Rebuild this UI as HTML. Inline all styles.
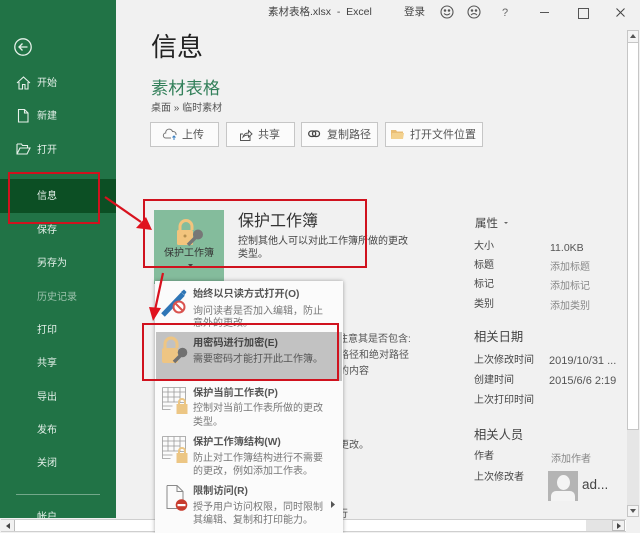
<!DOCTYPE html>
<html lang="zh-CN"><head><meta charset="utf-8"><title>信息</title>
<style>
html,body{margin:0;padding:0}
body{width:640px;height:533px;overflow:hidden;background:#f1f1f1;font-family:"Liberation Sans","Noto Sans CJK SC",sans-serif;color:#444}
#w{position:absolute;left:0;top:0;width:640px;height:533px;overflow:hidden;background:#f1f1f1;filter:blur(.35px)}
.t{position:absolute;white-space:nowrap;line-height:14px;font-size:10px}
.a{position:absolute}
.n{color:#e4f0e9;left:37px}
.btn{position:absolute;top:122px;height:23px;background:#fbfbfb;border:1px solid #c6c6c6;box-sizing:content-box}
.r{position:absolute;border:2px solid #d0121e;box-sizing:border-box}
.h{font-size:10.2px;font-weight:bold;color:#555}
.d{font-size:10px;color:#777}
.g{color:#888}
svg{position:absolute;overflow:visible}
</style></head><body><div id="w">
<div class="a" style="left:0;top:0;width:116px;height:518px;background:#217346"></div>
<div class="a" style="left:0;top:179px;width:116px;height:34px;background:#0c4f24"></div>
<div class="a" style="left:16px;top:494px;width:84px;height:1px;background:#73a88a"></div>

<svg style="left:14px;top:38px" width="20" height="20" fill="none" stroke="#e6f1ea" stroke-width="1.3"><circle cx="9" cy="9" r="8.2"/><path d="M13.5 9H5M8.5 5.5 5 9l3.5 3.5"/></svg>
<svg style="left:16px;top:75px" width="16" height="16" fill="none" stroke="#e6f1ea" stroke-width="1.1"><path d="M1 8 7.500 2 14 8M3 7v7h3.500V9.500h2.500V14H12V7"/></svg>
<svg style="left:17px;top:108px" width="14" height="16" fill="none" stroke="#e6f1ea" stroke-width="1.1"><path d="M1.500 1.500h6l3.500 3.500v9h-9.500zM7.500 1.500V5H11"/></svg>
<svg style="left:16px;top:142px" width="16" height="14" fill="none" stroke="#e6f1ea" stroke-width="1.1"><path d="M1 2h4.500l1 1.500h5V6M1 2v10h10l3-6H4L1 12"/></svg>

<span class="t n" style="top:77px">开始</span>
<span class="t n" style="top:110px">新建</span>
<span class="t n" style="top:144px">打开</span>
<span class="t n" style="top:190px">信息</span>
<span class="t n" style="top:224px">保存</span>
<span class="t n" style="top:257px">另存为</span>
<span class="t" style="left:37px;top:291px;color:#9cc2ac">历史记录</span>
<span class="t n" style="top:324px">打印</span>
<span class="t n" style="top:357px">共享</span>
<span class="t n" style="top:391px">导出</span>
<span class="t n" style="top:424px">发布</span>
<span class="t n" style="top:457px">关闭</span>
<span class="t n" style="top:511px;height:7px;overflow:hidden">帐户</span>

<span class="t" style="left:268px;top:5px;font-size:10.5px;color:#444">素材表格.xlsx &nbsp;-&nbsp; Excel</span>
<span class="t" style="left:404px;top:5px;font-size:10.5px;color:#444">登录</span>
<svg style="left:440px;top:5px" width="16" height="16" fill="none" stroke="#555" stroke-width="1.1"><circle cx="7" cy="7" r="6"/><circle cx="5" cy="5.500" r=".7" fill="#555"/><circle cx="9" cy="5.500" r=".7" fill="#555"/><path d="M4 8.500q3 2.800 6 0"/></svg>
<svg style="left:467px;top:5px" width="16" height="16" fill="none" stroke="#555" stroke-width="1.1"><circle cx="7" cy="7" r="6"/><circle cx="5" cy="5.500" r=".7" fill="#555"/><circle cx="9" cy="5.500" r=".7" fill="#555"/><path d="M4 10q3-2.800 6 0"/></svg>
<span class="t" style="left:502px;top:6px;font-size:11px;color:#666">?</span>
<div class="a" style="left:540px;top:12px;width:9px;height:1px;background:#555"></div>
<div class="a" style="left:578px;top:8px;width:9px;height:9px;border:1px solid #555"></div>
<svg style="left:616px;top:8px" width="11" height="11" stroke="#444" stroke-width="1"><path d="M.5.500l8 8M8.500.500l-8 8"/></svg>

<span class="t" style="left:151px;top:31px;font-size:26px;line-height:32px;color:#222">信息</span>
<span class="t" style="left:151px;top:78px;font-size:17.300px;line-height:20px;color:#33805a">素材表格</span>
<span class="t" style="left:151px;top:102px;font-size:10px;color:#555">桌面 » 临时素材</span>

<div class="btn" style="left:150px;width:67px"></div>
<svg style="left:163px;top:128px" width="15" height="13" fill="none" stroke="#777" stroke-width="1"><path d="M8 10H3a2.500 2.500 0 0 1-.3-5A3.500 3.500 0 0 1 9.500 3.500 3 3 0 0 1 13 7"/><path d="M11 12V8M9.500 9.500 11 8l1.500 1.500" stroke="#3a7fc1"/></svg>
<span class="t" style="left:182px;top:128px;font-size:11px;color:#555">上传</span>
<div class="btn" style="left:226px;width:67px"></div>
<svg style="left:239px;top:128px" width="14" height="14" fill="none" stroke="#555" stroke-width="1"><path d="M11 8v4.500H1.500V6H4M4 9q1-4 5.500-4V2.500L13 6 9.500 9V7.200Q6 7 4 9z"/></svg>
<span class="t" style="left:258px;top:128px;font-size:11px;color:#555">共享</span>
<div class="btn" style="left:301px;width:75px"></div>
<svg style="left:308px;top:130px" width="13" height="9" fill="none" stroke="#444" stroke-width="1.300"><rect x=".7" y="1" width="7" height="5.500" rx="2.700"/><rect x="4.500" y="1" width="7" height="5.500" rx="2.700"/></svg>
<span class="t" style="left:327px;top:128px;font-size:11px;color:#555">复制路径</span>
<div class="btn" style="left:385px;width:96px"></div>
<svg style="left:391px;top:128px" width="14" height="12"><path d="M0 2h5l1 1.500h6V11H0z" fill="#e9bd74"/><path d="M1 5h12l-1 6H0z" fill="#f3d18e"/></svg>
<span class="t" style="left:410px;top:128px;font-size:11px;color:#555">打开文件位置</span>

<!-- protect -->
<span class="t" style="left:238px;top:212px;font-size:16px;line-height:20px;color:#333">保护工作簿</span>
<span class="t" style="left:238px;top:235px;font-size:10px;color:#444">控制其他人可以对此工作簿所做的更改</span>
<span class="t" style="left:238px;top:248px;font-size:10px;color:#444">类型。</span>
<div class="a" style="left:154px;top:210px;width:70px;height:74px;background:#84bc9c"></div>
<svg style="left:177px;top:220px" width="30" height="28"><path d="M3 10V6.500a6 6 0 0 1 12 0V10" fill="none" stroke="#f2c47d" stroke-width="3"/><rect y="10" width="16" height="15" rx="1.500" fill="#f2c47d"/><circle cx="8" cy="16" r="1.500" fill="#b58f4f"/><path d="M11 25l8-8" stroke="#777" stroke-width="3.500"/><circle cx="21" cy="14.500" r="5" fill="#777"/></svg>
<span class="t" style="left:164px;top:247px;font-size:10px;color:#333">保护工作簿</span>
<svg style="left:188px;top:264px" width="5" height="3"><path d="M0 0h5L2.500 3z" fill="#444"/></svg>

<!-- right -->
<span class="t" style="left:475px;top:217px;font-size:11.500px;color:#444">属性</span>
<svg style="left:504px;top:222px" width="4" height="2"><path d="M0 0h4L2 2z" fill="#666"/></svg>
<span class="t" style="left:474px;top:240px">大小</span><span class="t" style="left:550px;top:241px;font-size:10.500px;color:#555">11.0KB</span>
<span class="t" style="left:474px;top:259px">标题</span><span class="t g" style="left:550px;top:261px">添加标题</span>
<span class="t" style="left:474px;top:278px">标记</span><span class="t g" style="left:550px;top:280px">添加标记</span>
<span class="t" style="left:474px;top:298px">类别</span><span class="t g" style="left:550px;top:300px">添加类别</span>
<span class="t" style="left:474px;top:330px;font-size:12.300px">相关日期</span>
<span class="t" style="left:474px;top:354px">上次修改时间</span><span class="t" style="left:549px;top:354px;font-size:11px;color:#555">2019/10/31 ...</span>
<span class="t" style="left:474px;top:374px">创建时间</span><span class="t" style="left:549px;top:374px;font-size:11px;color:#555">2015/6/6 2:19</span>
<span class="t" style="left:474px;top:394px">上次打印时间</span>
<span class="t" style="left:474px;top:428px;font-size:12.300px">相关人员</span>
<span class="t" style="left:474px;top:450px">作者</span><span class="t g" style="left:551px;top:453px">添加作者</span>
<span class="t" style="left:474px;top:471px">上次修改者</span>
<div class="a" style="left:548px;top:471px;width:30px;height:30px;background:#b4b4b4;overflow:hidden"><div class="a" style="left:9px;top:4px;width:13px;height:15px;border-radius:50%;background:#f4f4f4"></div><div class="a" style="left:3px;top:20px;width:24px;height:12px;background:#f4f4f4;border-radius:5px 5px 0 0"></div></div>
<span class="t" style="left:582px;top:477px;font-size:13.500px;line-height:16px;color:#444">ad...</span>

<!-- text behind menu -->
<span class="t" style="left:338px;top:333px;color:#555">注意其是否包含:</span>
<span class="t" style="left:339px;top:349px;color:#555">路径和绝对路径</span>
<span class="t" style="left:339px;top:365px;color:#555">的内容</span>
<span class="t" style="left:339px;top:439px;color:#555">更改。</span>
<span class="t" style="left:338px;top:508px;height:11px;overflow:hidden;color:#555">行</span>

<!-- scrollbars -->
<div class="a" style="left:0;top:519px;width:640px;height:14px;background:#f1f1f1"></div>
<div class="a" style="left:1px;top:519px;width:625px;height:13px;background:#fff;border-top:1px solid #cfcfcf;border-bottom:1px solid #cfcfcf;box-sizing:border-box"></div>
<div class="a" style="left:1px;top:520px;width:13px;height:11px;background:#f1f1f1;border-right:1px solid #bbb"></div>
<svg style="left:6px;top:523px" width="4" height="6"><path d="M4 0v6L0 3z" fill="#444"/></svg>
<div class="a" style="left:586px;top:520px;width:26px;height:11px;background:#e4e4e4"></div>
<div class="a" style="left:612px;top:520px;width:13px;height:11px;background:#f1f1f1;border:1px solid #bbb;box-sizing:border-box"></div>
<svg style="left:617px;top:523px" width="4" height="6"><path d="M0 0v6l4-3z" fill="#444"/></svg>
<div class="a" style="left:627px;top:30px;width:12px;height:400px;background:#fff;border:1px solid #c6c6c6;box-sizing:border-box"></div>
<div class="a" style="left:627px;top:30px;width:12px;height:13px;background:#f4f4f4;border:1px solid #c6c6c6;box-sizing:border-box"></div>
<svg style="left:630px;top:34px" width="7" height="4"><path d="M0 4h6L3 0z" fill="#555"/></svg>
<div class="a" style="left:627px;top:430px;width:12px;height:75px;background:#e6e6e6"></div>
<div class="a" style="left:627px;top:505px;width:12px;height:12px;background:#f4f4f4;border:1px solid #c6c6c6;box-sizing:border-box"></div>
<svg style="left:630px;top:509px" width="7" height="4"><path d="M0 0h6L3 4z" fill="#555"/></svg>

<!-- menu -->
<div class="a" style="left:155px;top:281px;width:188px;height:252px;background:#fbfbfb;box-shadow:0 0 4px rgba(0,0,0,.35)"></div>
<div class="a" style="left:156px;top:332px;width:186px;height:49px;background:#c2c2c2"></div>

<svg style="left:161px;top:288px" width="28" height="32"><path d="M2 27 22 6" stroke="#2e75b6" stroke-width="5"/><path d="M20 4l3-2.500 2.500 2.500-2 3z" fill="#2e75b6"/><circle cx="18" cy="19" r="5.500" fill="#fff" stroke="#d9534f" stroke-width="2"/><path d="M14.500 15.500l7 7" stroke="#d9534f" stroke-width="2"/></svg>
<span class="t h" style="left:193px;top:288px">始终以只读方式打开(O)</span>
<span class="t d" style="left:193px;top:305px">询问读者是否加入编辑，防止</span>
<span class="t d" style="left:193px;top:317px;height:11px;overflow:hidden">意外的更改。</span>

<svg style="left:162px;top:337px" width="30" height="30"><path d="M3 11V7a6 6 0 0 1 12 0v4" fill="none" stroke="#eec583" stroke-width="3"/><rect y="11" width="16" height="15" rx="2" fill="#eec583"/><path d="M12 25l7-7" stroke="#707070" stroke-width="3.500"/><circle cx="20.500" cy="15.500" r="4.800" fill="#707070"/></svg>
<span class="t h" style="left:193px;top:337px;color:#444">用密码进行加密(E)</span>
<span class="t" style="left:193px;top:353px;font-size:10px;color:#555">需要密码才能打开此工作簿。</span>

<svg style="left:162px;top:387px" width="26" height="28" fill="none" stroke="#9a9a9a" stroke-width=".8"><path d="M.5.500h23v15h-6M.5.500v22h8M.5 5h23M.5 10h18M.5 15h16M.5 19h10M6 .5v15M12 .5v15M18 .5v15"/><path d="M17 17v-2a3 3 0 0 1 6 0v2" stroke="#ecc684" stroke-width="2"/><rect x="14.500" y="17" width="11" height="10" fill="#ecc684" stroke="none"/></svg>
<span class="t h" style="left:193px;top:387px">保护当前工作表(P)</span>
<span class="t d" style="left:193px;top:402px">控制对当前工作表所做的更改</span>
<span class="t d" style="left:193px;top:416px">类型。</span>

<svg style="left:162px;top:436px" width="26" height="28" fill="none" stroke="#9a9a9a" stroke-width=".8"><path d="M.5.500h23v15h-6M.5.500v22h8M.5 5h23M.5 10h18M.5 15h16M.5 19h10M6 .5v15M12 .5v15M18 .5v15"/><path d="M17 17v-2a3 3 0 0 1 6 0v2" stroke="#ecc684" stroke-width="2"/><rect x="14.500" y="17" width="11" height="10" fill="#ecc684" stroke="none"/></svg>
<span class="t h" style="left:193px;top:436px">保护工作簿结构(W)</span>
<span class="t d" style="left:193px;top:452px">防止对工作簿结构进行不需要</span>
<span class="t d" style="left:193px;top:465px">的更改，例如添加工作表。</span>

<svg style="left:166px;top:485px" width="22" height="28"><path d="M1 .5h10l6 6v8M1 .5v23h10" fill="none" stroke="#8a8a8a"/><path d="M11 .5v6h6" fill="none" stroke="#8a8a8a"/><circle cx="15.500" cy="20" r="5.800" fill="#c83c2e"/><rect x="11.500" y="19" width="8" height="2.200" fill="#fff"/></svg>
<span class="t h" style="left:193px;top:485px">限制访问(R)</span>
<span class="t d" style="left:193px;top:501px">授予用户访问权限，同时限制</span>
<span class="t d" style="left:193px;top:514px">其编辑、复制和打印能力。</span>
<svg style="left:331px;top:501px" width="4" height="7"><path d="M0 0v7l4-3.500z" fill="#555"/></svg>

<!-- annotations -->
<div class="r" style="left:8px;top:172px;width:92px;height:52px"></div>
<div class="r" style="left:143px;top:199px;width:224px;height:69px"></div>
<div class="r" style="left:142px;top:323px;width:197px;height:58px"></div>
<svg style="left:0;top:0" width="640" height="533"><path d="M105 197 141 222" stroke="#d8121e" stroke-width="2.200" fill="none"/><path d="M152 230 136 228 146 217z" fill="#e0121e"/><path d="M163 273 155 310" stroke="#d8121e" stroke-width="2.200" fill="none"/><path d="M149 307 161 308 153 321z" fill="#e0121e"/></svg>
</div></body></html>
